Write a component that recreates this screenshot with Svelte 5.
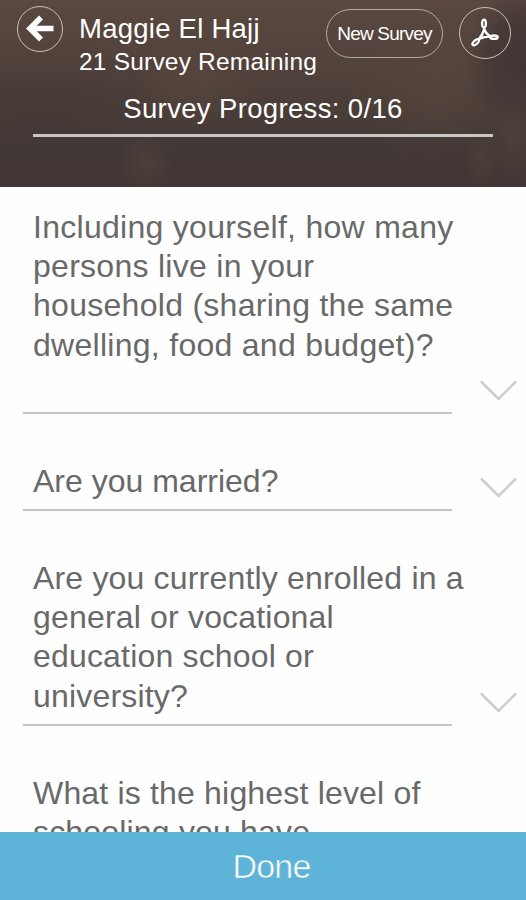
<script>
    const respondent = "Maggie El Hajj";
    const remaining = 21;
    const answered = 0;
    const total = 16;

    const questions = [
        {
            id: "household",
            text: "Including yourself, how many\npersons live in your\nhousehold (sharing the same\ndwelling, food and budget)?",
            spaced: true,
        },
        { id: "married", text: "Are you married?", tight: true },
        {
            id: "enrolled",
            text: "Are you currently enrolled in a\ngeneral or vocational\neducation school or\nuniversity?",
        },
        { id: "schooling", text: "What is the highest level of\nschooling you have\ncompleted?" },
    ];

    let openQuestion = null;

    const toggleQuestion = (id) => {
        openQuestion = openQuestion === id ? null : id;
    };
</script>

<div class="app">
    <header>
        <div class="top-bar">
            <button class="round back" aria-label="Back">
                <svg width="30" height="28" viewBox="0 0 30 28">
                    <path d="M4 13.500H28.500M16 2.500L5 13.500L16 24.500" fill="none" stroke="#fff" stroke-width="5.600" />
                </svg>
            </button>
            <div class="person">
                <div class="name">{respondent}</div>
                <div class="remaining">{remaining} Survey Remaining</div>
            </div>
            <button class="new-survey"><span>New Survey</span></button>
            <button class="round pdf" aria-label="Export PDF">
                <svg width="30" height="32" viewBox="0 0 30 32">
                    <g fill="none" stroke="#fff" stroke-linejoin="round">
                        <path d="M14.200 12C15.500 15.500 18 18.300 21 19.500C17 19.300 12.500 20.300 9 22C11.500 19 13.500 15.500 14.200 12Z" stroke-width="2.400" />
                        <ellipse cx="14" cy="6.500" rx="1.900" ry="3.900" stroke-width="2.300" />
                        <ellipse cx="24" cy="20.200" rx="3.700" ry="1.700" stroke-width="2.300" />
                        <ellipse cx="5.700" cy="25.300" rx="4" ry="1.900" stroke-width="2.300" transform="rotate(-43 5.700 25.300)" />
                    </g>
                </svg>
            </button>
        </div>
        <div class="progress"><span>Survey Progress: {answered}/{total}</span></div>
    </header>

    <main>
        {#each questions as question (question.id)}
            <div class="question" class:spaced={question.spaced} class:tight={question.tight}>
                <div class="field"><p>{question.text}</p></div>
                <button
                    class="chevron"
                    class:open={openQuestion === question.id}
                    aria-label="Show answers"
                    on:click={() => toggleQuestion(question.id)}
                >
                    <svg width="38" height="22" viewBox="0 0 38 22">
                        <path d="M1 1.500L18.500 19L36 1.500" fill="none" stroke="#cdcdcd" stroke-width="2.600" />
                    </svg>
                </button>
            </div>
        {/each}
    </main>

    <button class="done"><span>Done</span></button>
</div>

<style>
    :global(body) {
        margin: 0;
        background: #fefefe;
    }

    .app {
        display: flex;
        flex-direction: column;
        height: 900px;
        overflow: hidden;
        font-family: "Liberation Sans", Arial, sans-serif;
    }

    button {
        display: flex;
        align-items: center;
        justify-content: center;
        box-sizing: border-box;
        flex: none;
        padding: 0;
        border: none;
        background: none;
        color: #fff;
        font-family: inherit;
        cursor: pointer;
    }

    header {
        flex: none;
        height: 187px;
        color: #fff;
        background:
            radial-gradient(ellipse 24px 40px at 513px 138px, #57463a99, transparent),
            radial-gradient(ellipse 18px 28px at 482px 158px, #57463a88, transparent),
            radial-gradient(ellipse 28px 30px at 146px 162px, #5b493f77, transparent),
            radial-gradient(ellipse 60px 80px at 526px 60px, #3f3534, #3f353499 60%, transparent),
            radial-gradient(ellipse 60px 50px at 195px 82px, #5b483e88, transparent),
            radial-gradient(ellipse 90px 80px at 435px 85px, #57463c99, transparent),
            radial-gradient(ellipse 130px 60px at 40px 100px, #41363577, transparent),
            linear-gradient(#5a4840, #51423b 35%, #493d38 60%, #413735 80%, #423735);
    }

    .top-bar {
        display: flex;
        align-items: flex-start;
        height: 86px;
        padding: 0 15px 0 17px;
    }

    .round {
        border: 1.500px solid #c9c0ba;
        border-radius: 50%;
    }

    .back {
        width: 46px;
        height: 46px;
        margin-top: 6px;
    }

    .person {
        flex: 1;
        padding: 12px 0 0 16px;
        white-space: nowrap;
    }

    .name {
        font-size: 27.500px;
        line-height: 33px;
        letter-spacing: 0.250px;
    }

    .remaining {
        font-size: 24.500px;
        line-height: 33px;
        letter-spacing: 0.200px;
    }

    .new-survey {
        width: 117px;
        height: 49px;
        margin: 9px 16px 0 0;
        border: 1.500px solid #b5aaa3;
        border-radius: 25px;
        font-size: 19px;
        letter-spacing: -0.800px;
        white-space: nowrap;
    }

    .pdf {
        width: 52px;
        height: 52px;
        margin-top: 7px;
    }

    .progress {
        height: 48px;
        margin: 0 33px;
        border-bottom: 3px solid #c9c7c3;
        font-size: 27.500px;
        letter-spacing: 0.350px;
        line-height: 45px;
        text-align: center;
    }

    main {
        flex: 1;
        min-height: 0;
        overflow: hidden;
        padding: 21px 8px 0 23px;
    }

    .question {
        display: flex;
        align-items: flex-end;
        justify-content: space-between;
        margin-bottom: 48px;
    }

    .field {
        width: 429px;
        border-bottom: 2px solid #c4c4c4;
    }

    .field p {
        margin: 0;
        padding: 0 0 8px 10px;
        color: #696969;
        font-size: 32px;
        letter-spacing: 0.180px;
        line-height: 39.200px;
        white-space: pre;
    }

    .spaced p {
        padding-bottom: 47px;
        letter-spacing: 0.280px;
    }

    .tight p {
        letter-spacing: 0;
    }

    .chevron {
        margin-bottom: 12px;
    }

    .chevron.open {
        transform: rotate(180deg);
    }

    .done {
        width: 100%;
        height: 68px;
        padding-left: 17px;
        background: #5eb3d9;
        font-size: 34px;
        letter-spacing: -0.800px;
        -webkit-text-stroke: 0.600px #5eb3d9;
    }
</style>
